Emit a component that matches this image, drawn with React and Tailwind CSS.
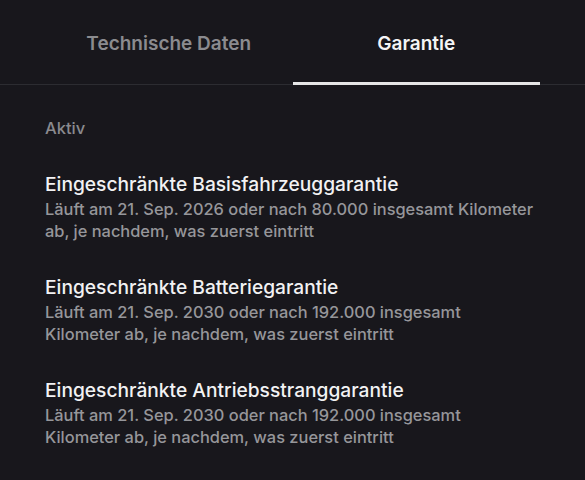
const warranties = [
  {
    title: "Eingeschränkte Basisfahrzeuggarantie",
    detail: "Läuft am 21. Sep. 2026 oder nach 80.000 insgesamt Kilometer ab, je nachdem, was zuerst eintritt",
  },
  {
    title: "Eingeschränkte Batteriegarantie",
    detail: "Läuft am 21. Sep. 2030 oder nach 192.000 insgesamt Kilometer ab, je nachdem, was zuerst eintritt",
  },
  {
    title: "Eingeschränkte Antriebsstranggarantie",
    detail: "Läuft am 21. Sep. 2030 oder nach 192.000 insgesamt Kilometer ab, je nachdem, was zuerst eintritt",
  },
];

function Tabs() {
  return (
    <div className="border-b border-[#2c2c31] px-[45px]">
      <div className="grid grid-cols-2">
        <button className="flex h-[84px] items-center justify-center pt-[5px] text-[19px] font-semibold text-[#8b8b8f]">
          Technische Daten
        </button>
        <button className="relative flex h-[84px] items-center justify-center pt-[5px] text-[19px] font-semibold text-[#f4f4f5]">
          Garantie
          <span className="absolute inset-x-0 bottom-[-1px] h-[3px] bg-[#e6e6e6]" />
        </button>
      </div>
    </div>
  );
}

export default function App() {
  return (
    <div className="h-[480px] w-[585px] overflow-hidden bg-[#18171c] font-['Inter',sans-serif] antialiased">
      <Tabs />
      <div className="px-[45px] pt-[34px]">
        <p className="text-[16.5px] font-medium leading-[18px] text-[#8a8a8e]">Aktiv</p>
        <div className="mt-[35px] flex flex-col gap-[33px]">
          {warranties.map((w) => (
            <div key={w.title}>
              <p className="text-[19.2px] font-medium leading-[24px] text-[#f2f2f3]">{w.title}</p>
              <p className="mt-[2px] text-[16.4px] font-medium leading-[22px] text-[#96969a]">{w.detail}</p>
            </div>
          ))}
        </div>
      </div>
    </div>
  );
}
